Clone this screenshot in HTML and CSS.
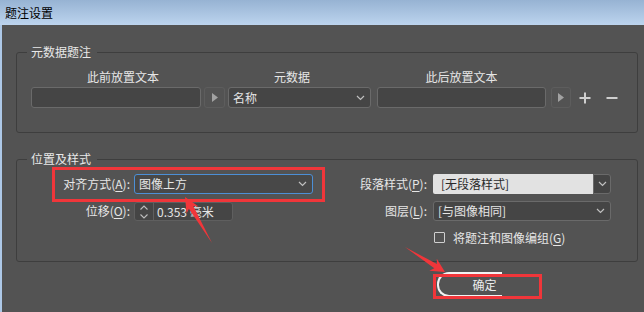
FILE: index.html
```html
<!DOCTYPE html>
<html lang="zh-CN">
<head>
<meta charset="utf-8">
<title>题注设置</title>
<link rel="stylesheet" href="styles.css">
</head>
<body>
<div class="window">
  <div class="titlebar">题注设置</div>
  <div class="content">
    <fieldset class="group meta">
      <legend>元数据题注</legend>
      <div class="meta-labels">
        <span class="ml ml1">此前放置文本</span>
        <span class="ml ml2">元数据</span>
        <span class="ml ml3">此后放置文本</span>
      </div>
      <div class="meta-row">
        <div class="field f1"></div>
        <div class="arrowbtn b1"><svg width="6" height="9" viewBox="0 0 6 9"><polygon points="0,0 6,4.5 0,9" fill="#a2a2a2"/></svg></div>
        <div class="field select s1"><span>名称</span><svg class="chev" width="9" height="6" viewBox="0 0 9 6"><polyline points="1,1 4.5,4.5 8,1" fill="none" stroke="#c0c0c0" stroke-width="1.2"/></svg></div>
        <div class="field f3"></div>
        <div class="arrowbtn b2"><svg width="6" height="9" viewBox="0 0 6 9"><polygon points="0,0 6,4.5 0,9" fill="#a2a2a2"/></svg></div>
        <svg class="pm plus" width="12" height="12" viewBox="0 0 12 12"><path d="M6 0.5V11.5M0.5 6H11.5" stroke="#cfcfcf" stroke-width="2"/></svg>
        <svg class="pm minus" width="12" height="12" viewBox="0 0 12 12"><path d="M0.5 6H11.5" stroke="#cfcfcf" stroke-width="2"/></svg>
      </div>
    </fieldset>

    <fieldset class="group pos">
      <legend>位置及样式</legend>
      <div class="pos-grid">
        <label class="lbl l-left">对齐方式(<u>A</u>):</label>
        <div class="field select blue"><span>图像上方</span><svg class="chev" width="9" height="6" viewBox="0 0 9 6"><polyline points="1,1 4.5,4.5 8,1" fill="none" stroke="#c0c0c0" stroke-width="1.2"/></svg></div>
        <label class="lbl l-right">段落样式(<u>P</u>):</label>
        <div class="combo">
          <div class="combo-text">[无段落样式]</div>
          <div class="combo-btn"><svg width="9" height="6" viewBox="0 0 9 6"><polyline points="1,1 4.5,4.5 8,1" fill="none" stroke="#c0c0c0" stroke-width="1.2"/></svg></div>
        </div>

        <label class="lbl l-left">位移(<u>O</u>):</label>
        <div class="spin">
          <div class="spin-arrows">
            <svg width="8" height="5" viewBox="0 0 8 5"><polyline points="0.5,4.5 4,1 7.5,4.5" fill="none" stroke="#bdbdbd" stroke-width="1.1"/></svg>
            <svg width="8" height="5" viewBox="0 0 8 5"><polyline points="0.5,0.5 4,4 7.5,0.5" fill="none" stroke="#bdbdbd" stroke-width="1.1"/></svg>
          </div>
          <div class="spin-val">0.353 毫米</div>
        </div>
        <label class="lbl l-right">图层(<u>L</u>):</label>
        <div class="field select layer"><span>[与图像相同]</span><svg class="chev" width="9" height="6" viewBox="0 0 9 6"><polyline points="1,1 4.5,4.5 8,1" fill="none" stroke="#c0c0c0" stroke-width="1.2"/></svg></div>

        <div class="check-row">
          <span class="checkbox"></span>
          <span class="check-label">将题注和图像编组(<u>G</u>)</span>
        </div>
      </div>
    </fieldset>

    <div class="footer">
      <button class="ok">确定</button>
    </div>
  </div>

  <svg class="annot" width="644" height="312" viewBox="0 0 644 312">
    <rect x="53.5" y="168.5" width="270" height="32" fill="none" stroke="#f0363a" stroke-width="3"/>
    <rect x="434.5" y="275.5" width="106" height="22" fill="none" stroke="#f0363a" stroke-width="3"/>
    <polygon points="212,243 193.3,206.1 198.6,206.4 185,197 186.6,213.4 188.9,208.7" fill="#f0363a"/>
    <polygon points="405,247 436.9,264.1 436.8,258.7 445,272 429.4,270.7 434.3,268.3" fill="#f0363a"/>
  </svg>
</div>
</body>
</html>
```

FILE: styles.css
```css
html, body {
  margin: 0;
  padding: 0;
}

body {
  width: 644px;
  height: 312px;
  overflow: hidden;
  background: #535353;
  font-family: "Noto Sans CJK SC", "Microsoft YaHei", "Noto Sans", sans-serif;
  font-size: 12px;
  line-height: 14px;
  color: #e6e6e6;
}

.window {
  position: relative;
  width: 644px;
  height: 312px;
}

.titlebar {
  height: 25px;
  line-height: 25px;
  padding-left: 5px;
  color: #000;
  background: linear-gradient(#97b3d3, #bcd4ee);
}

.content {
  box-sizing: border-box;
  height: 287px;
  border-left: 2px solid #adc8e7;
  padding: 20px 6px 0 14px;
}

.group {
  margin: 0;
  min-width: 0;
  border: 1px solid #3e3e3e;
  border-radius: 3px;
  padding: 11px 0 24px 10px;
}

.group legend {
  padding: 0 6px 0 4px;
  line-height: 14px;
  color: #e8e8e8;
}

.pos {
  margin-top: 19px;
  padding: 8px 0 13px 10px;
}

/* metadata rows */
.meta-labels {
  display: flex;
  height: 14px;
  margin-bottom: 3px;
}

.ml {
  box-sizing: border-box;
  text-align: center;
  white-space: nowrap;
}

.ml1 {
  margin-left: 4px;
  width: 170px;
  padding-left: 14px;
}

.ml2 {
  margin-left: 27px;
  width: 143px;
  padding-right: 15px;
}

.ml3 {
  margin-left: 6px;
  width: 169px;
}

.meta-row {
  display: flex;
  align-items: center;
  height: 21px;
}

.field {
  box-sizing: border-box;
  height: 21px;
  background: #454545;
  border: 1px solid #6a6a6a;
  border-radius: 3px;
}

.f1 {
  margin-left: 4px;
  width: 170px;
}

.arrowbtn {
  box-sizing: border-box;
  height: 21px;
  border: 1px solid #5d5d5d;
  border-radius: 3px;
  display: flex;
  align-items: center;
  justify-content: center;
}

.b1 {
  margin-left: 3px;
  width: 21px;
}

.s1 {
  margin-left: 3px;
  width: 143px;
}

.f3 {
  margin-left: 6px;
  width: 169px;
}

.b2 {
  margin-left: 5px;
  width: 20px;
}

.plus {
  margin-left: 8px;
}

.minus {
  margin-left: 15px;
}

.select {
  display: flex;
  align-items: center;
  justify-content: space-between;
  padding: 0 5px 0 4px;
  white-space: nowrap;
}

.select span {
  line-height: 14px;
}

/* position & style */
.pos-grid {
  display: grid;
  grid-template-columns: 107px 179px 120px 178px;
  grid-template-rows: 20px 20px 20px;
  row-gap: 7px;
  align-items: stretch;
}

.lbl {
  display: flex;
  align-items: center;
  justify-content: flex-end;
  white-space: nowrap;
  line-height: 14px;
}

.l-left {
  padding-right: 4px;
}

.l-right {
  padding-right: 6px;
}

.lbl u,
.check-label u {
  text-decoration: underline;
  text-underline-offset: 2px;
}

.blue {
  height: 20px;
  border-color: #4c8fd6;
  background: #484848;
}

.combo {
  display: flex;
  height: 20px;
}

.combo-text {
  flex: 1;
  box-sizing: border-box;
  background: #e2e2e2;
  color: #2a2a2a;
  padding-left: 8px;
  display: flex;
  align-items: center;
  border-radius: 2px 0 0 2px;
}

.combo-btn {
  box-sizing: border-box;
  width: 18px;
  background: #444;
  border: 1px solid #6a6a6a;
  border-radius: 0 3px 3px 0;
  display: flex;
  align-items: center;
  justify-content: center;
}

.spin {
  box-sizing: border-box;
  width: 99px;
  height: 19px;
  margin-top: 1px;
  display: flex;
  background: #454545;
  border: 1px solid #5f5f5f;
  border-radius: 3px;
}

.spin-arrows {
  width: 18px;
  border-right: 1px solid #5f5f5f;
  display: flex;
  flex-direction: column;
  align-items: center;
  justify-content: center;
  gap: 4px;
}

.spin-val {
  padding-left: 3px;
  display: flex;
  align-items: center;
  white-space: nowrap;
}

.layer {
  height: 20px;
  padding-left: 4px;
}

.check-row {
  grid-column: 4;
  grid-row: 3;
  display: flex;
  align-items: center;
  margin-top: -1px;
}

.checkbox {
  box-sizing: border-box;
  width: 11px;
  height: 11px;
  margin-left: 1px;
  border: 1px solid #cfcfcf;
  border-radius: 1px;
}

.check-label {
  margin-left: 8px;
  white-space: nowrap;
}

/* footer */
.footer {
  display: flex;
  margin-top: 10px;
  padding-left: 421px;
}

.ok {
  position: relative;
  width: 95px;
  height: 25px;
  margin: 0;
  padding: 0;
  border: none;
  background: transparent;
  color: #ececec;
  font: inherit;
  display: flex;
  align-items: center;
  justify-content: center;
}

.ok::before {
  content: "";
  position: absolute;
  left: 0;
  top: 0;
  width: 65px;
  height: 25px;
  box-sizing: border-box;
  border: 2px solid #f2f2f2;
  border-right: none;
  border-radius: 12px 0 0 12px;
}

.annot {
  position: absolute;
  left: 0;
  top: 0;
  pointer-events: none;
}
```
